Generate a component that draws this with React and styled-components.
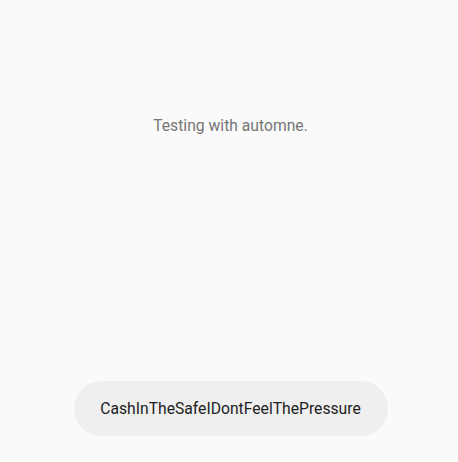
import styled, { createGlobalStyle } from "styled-components"

const Global = createGlobalStyle`
    html, body {
        margin: 0;
        padding: 0;
        background-color: #fafafa;
        font-family: Roboto, "Noto Sans", sans-serif;
    }
`

const Screen = styled.div`
    height: 462px;
    display: flex;
    flex-direction: column;
    align-items: center;
    justify-content: space-between;
    box-sizing: border-box;
    padding: 116px 0 26px 3px;
`

const Message = styled.p`
    margin: 0;
    font-size: 15.7px;
    line-height: 20px;
    color: #757575;
`

const Pill = styled.div`
    width: 314px;
    height: 55px;
    border-radius: 28px;
    background-color: #efefef;
    display: flex;
    align-items: center;
    justify-content: center;
    font-size: 15.7px;
    color: #212121;
`

const App = () => {
    return (
        <>
            <Global />
            <Screen>
                <Message>Testing with automne.</Message>
                <Pill>CashInTheSafeIDontFeelThePressure</Pill>
            </Screen>
        </>
    )
}

export default App
